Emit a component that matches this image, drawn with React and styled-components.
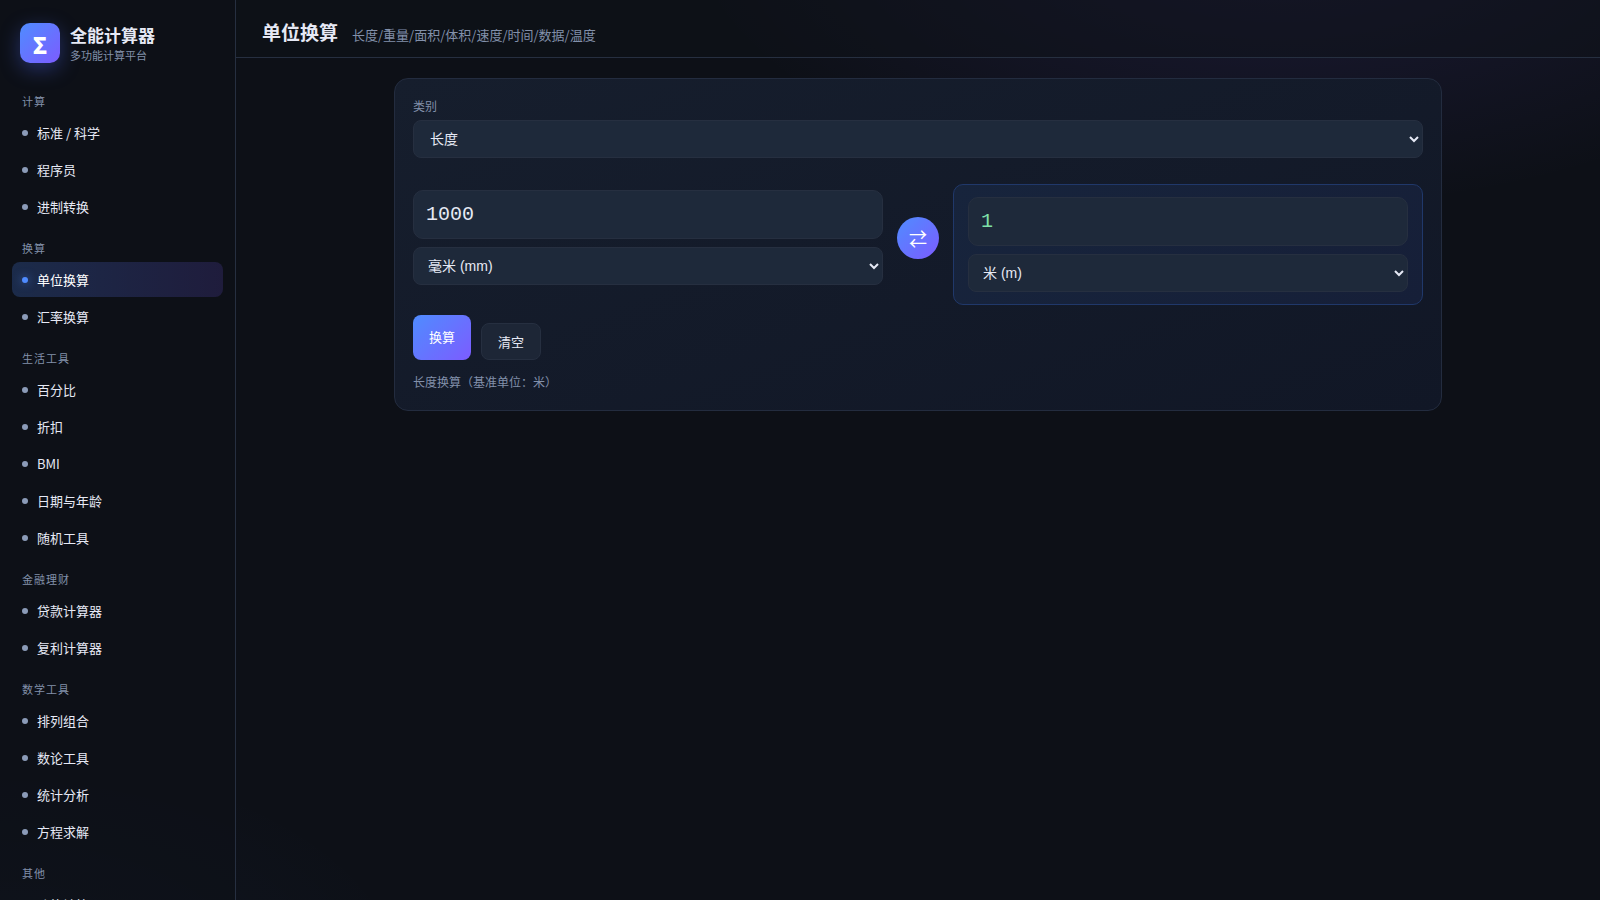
import React, { useState } from 'react';
import styled, { createGlobalStyle } from 'styled-components';

const sans = `'Noto Sans CJK SC', sans-serif`;

const GlobalStyle = createGlobalStyle`
  * {
    box-sizing: border-box;
  }
  body {
    margin: 0;
    min-height: 100vh;
    color: #e6e9f5;
    font-family: ${sans};
    font-size: 14px;
    background:
      radial-gradient(1000px 500px at 80% -10%, rgba(124, 92, 255, 0.14), transparent 60%),
      radial-gradient(700px 400px at 0% 110%, rgba(79, 140, 255, 0.05), transparent 60%),
      #0d1017;
    background-attachment: fixed;
  }
  button, input, select {
    font-family: inherit;
  }
`;

const Layout = styled.div`
  display: grid;
  grid-template-columns: 236px 1fr;
  height: 100vh;
  overflow: hidden;
`;
const Sidebar = styled.aside`
  min-height: 0;
  padding: 18px 12px;
  overflow-y: auto;
  scrollbar-width: none;
  background: rgba(13, 17, 23, 0.6);
  border-right: 1px solid #262f40;
`;
const Brand = styled.div`
  display: flex;
  align-items: center;
  gap: 10px;
  padding: 4px 8px 16px;
`;
const Logo = styled.div`
  display: grid;
  place-items: center;
  width: 40px;
  height: 40px;
  padding-top: 2px;
  border-radius: 10px;
  background: linear-gradient(135deg, #4f8cff, #7c5cff);
  box-shadow: 0 6px 20px rgba(79, 110, 255, 0.35);
  color: #fff;
  font-size: 23px;
  font-weight: 800;
`;
const BrandName = styled.div`
  font-size: 17px;
  line-height: 25px;
  font-weight: 700;
`;
const BrandSub = styled.div`
  color: #8290aa;
  font-size: 11px;
  line-height: 16px;
`;
const GroupTitle = styled.div`
  padding: 14px 10px 6px;
  color: #8290aa;
  font-size: 11px;
  line-height: 16px;
  letter-spacing: 1px;
`;
const NavItem = styled.button`
  display: flex;
  align-items: center;
  gap: 9px;
  width: 100%;
  margin-bottom: 2px;
  padding: 8px 10px;
  border: 0;
  border-radius: 8px;
  background: ${({ $active }) =>
    $active ? 'linear-gradient(90deg, rgba(79, 140, 255, 0.22), rgba(124, 92, 255, 0.16))' : 'transparent'};
  color: ${({ $active }) => ($active ? '#fff' : '#e6e9f5')};
  font-size: 13px;
  line-height: 19px;
  text-align: left;
  cursor: pointer;
`;
const Dot = styled.span`
  width: 6px;
  height: 6px;
  border-radius: 50%;
  background: ${({ $active }) => ($active ? '#4f8cff' : '#8b9bb8')};
  box-shadow: ${({ $active }) => ($active ? '0 0 10px rgba(79, 140, 255, 0.7)' : 'none')};
`;
const Main = styled.main`
  display: flex;
  flex-direction: column;
  min-width: 0;
  min-height: 0;
`;
const TopBar = styled.header`
  display: flex;
  align-items: baseline;
  gap: 14px;
  padding: 18px 26px 12px;
  border-bottom: 1px solid #262f40;
  background: rgba(13, 17, 23, 0.5);
`;
const PageTitle = styled.h1`
  margin: 0;
  font-size: 19px;
  line-height: 27px;
  font-weight: 700;
`;
const PageDesc = styled.span`
  color: #8290aa;
  font-size: 13px;
`;
const Content = styled.div`
  width: 100%;
  max-width: 1100px;
  margin: 0 auto;
  padding: 20px 26px;
`;
const Card = styled.section`
  padding: 18px;
  border: 1px solid #232c3f;
  border-radius: 14px;
  background: linear-gradient(160deg, #161e2d, #111726);
`;
const Field = styled.div`
  margin-bottom: 14px;
`;
const Label = styled.label`
  display: block;
  margin-bottom: 6px;
  color: #8290aa;
  font-size: 12px;
  line-height: 17px;
`;
const Select = styled.select`
  display: block;
  width: 100%;
  height: 38px;
  padding: 0 ${({ $wide }) => ($wide ? '12px' : '10px')};
  padding-right: 0;
  border: 1px solid #262f40;
  border-radius: 8px;
  background: #1e293a;
  color: #e6e9f5;
  font-family: 'Liberation Sans', ${sans};
  font-size: 14px;
`;
const NumberInput = styled.input`
  display: block;
  width: 100%;
  margin-bottom: 8px;
  padding: 12px;
  border: 1px solid #262f40;
  border-radius: 10px;
  background: #1e293a;
  color: ${({ $result }) => ($result ? '#7ee0a8' : '#e6e9f5')};
  font-family: 'Liberation Mono', monospace;
  font-size: 20px;
  line-height: 23px;
`;
const Converter = styled.div`
  display: grid;
  grid-template-columns: 1fr auto 1fr;
  align-items: center;
  gap: 14px;
  margin: 26px 0 10px;
`;
const SwapButton = styled.button`
  display: grid;
  place-items: center;
  width: 42px;
  height: 42px;
  margin-bottom: 14px;
  padding: 0;
  border: 0;
  border-radius: 50%;
  background: linear-gradient(135deg, #4f8cff, #7c5cff);
  color: #fff;
  font-size: 18px;
  cursor: pointer;
`;
const ResultBox = styled.div`
  padding: 12px 14px;
  border: 1px solid #20386a;
  border-radius: 10px;
  background: linear-gradient(135deg, #17243c, #161f38);
`;
const Actions = styled.div`
  display: flex;
  align-items: flex-end;
  gap: 10px;
`;
const Button = styled.button`
  padding: 8px 16px;
  border: 1px solid #262f40;
  border-radius: 8px;
  background: #1d2636;
  color: #e6e9f5;
  font-size: 13px;
  line-height: 19px;
  cursor: pointer;
`;
const PrimaryButton = styled(Button)`
  padding: 12px 16px 14px;
  border: 0;
  background: linear-gradient(135deg, #4f8cff, #7c5cff);
  color: #fff;
`;
const Hint = styled.p`
  margin: 12px 0 0;
  color: #8290aa;
  font-size: 12px;
  line-height: 20px;
`;

const groups = [
  { title: '计算', items: ['标准 / 科学', '程序员', '进制转换'] },
  { title: '换算', items: ['单位换算', '汇率换算'] },
  { title: '生活工具', items: ['百分比', '折扣', 'BMI', '日期与年龄', '随机工具'] },
  { title: '金融理财', items: ['贷款计算器', '复利计算器'] },
  { title: '数学工具', items: ['排列组合', '数论工具', '统计分析', '方程求解'] },
  { title: '其他', items: ['功能计算'] }
];

const units = [
  { id: 'mm', name: '毫米 (mm)', factor: 0.001 },
  { id: 'cm', name: '厘米 (cm)', factor: 0.01 },
  { id: 'm', name: '米 (m)', factor: 1 },
  { id: 'km', name: '千米 (km)', factor: 1000 }
];

const factorOf = (id) => units.find((u) => u.id === id).factor;

const App = () => {
  const [active, setActive] = useState('单位换算');
  const [value, setValue] = useState('1000');
  const [from, setFrom] = useState('mm');
  const [to, setTo] = useState('m');
  const [result, setResult] = useState('1');

  const convert = () => {
    const n = parseFloat(value);
    setResult(Number.isNaN(n) ? '' : String((n * factorOf(from)) / factorOf(to)));
  };

  const swap = () => {
    setFrom(to);
    setTo(from);
    setValue(result);
    setResult(value);
  };

  const clear = () => {
    setValue('');
    setResult('');
  };

  const unitOptions = units.map((u) => (
    <option key={u.id} value={u.id}>{u.name}</option>
  ));

  return (
    <>
      <GlobalStyle />
      <Layout>
        <Sidebar>
          <Brand>
            <Logo>Σ</Logo>
            <div>
              <BrandName>全能计算器</BrandName>
              <BrandSub>多功能计算平台</BrandSub>
            </div>
          </Brand>
          <nav>
            {groups.map((group) => (
              <div key={group.title}>
                <GroupTitle>{group.title}</GroupTitle>
                {group.items.map((item) => (
                  <NavItem key={item} type="button" $active={item === active} onClick={() => setActive(item)}>
                    <Dot $active={item === active} />
                    {item}
                  </NavItem>
                ))}
              </div>
            ))}
          </nav>
        </Sidebar>

        <Main>
          <TopBar>
            <PageTitle>单位换算</PageTitle>
            <PageDesc>长度/重量/面积/体积/速度/时间/数据/温度</PageDesc>
          </TopBar>
          <Content>
            <Card>
              <Label htmlFor="category">类别</Label>
              <Select id="category" $wide defaultValue="长度">
                {['长度', '重量', '面积', '体积', '速度', '时间', '数据', '温度'].map((c) => (
                  <option key={c}>{c}</option>
                ))}
              </Select>

              <Converter>
                <Field>
                  <NumberInput aria-label="数值" value={value} onChange={(e) => setValue(e.target.value)} />
                  <Select aria-label="原单位" value={from} onChange={(e) => setFrom(e.target.value)}>
                    {unitOptions}
                  </Select>
                </Field>
                <SwapButton type="button" aria-label="交换" onClick={swap}>⇄</SwapButton>
                <ResultBox>
                  <NumberInput aria-label="结果" $result readOnly value={result} />
                  <Select aria-label="目标单位" value={to} onChange={(e) => setTo(e.target.value)}>
                    {unitOptions}
                  </Select>
                </ResultBox>
              </Converter>

              <Actions>
                <PrimaryButton type="button" onClick={convert}>换算</PrimaryButton>
                <Button type="button" onClick={clear}>清空</Button>
              </Actions>
              <Hint>长度换算（基准单位：米）</Hint>
            </Card>
          </Content>
        </Main>
      </Layout>
    </>
  );
};

export default App;
